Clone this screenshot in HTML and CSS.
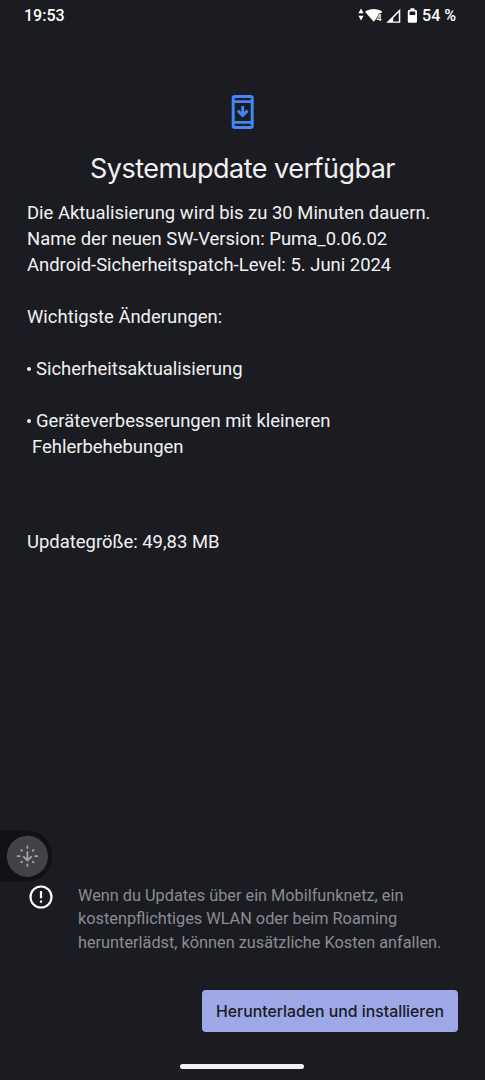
FILE: index.html
```html
<!DOCTYPE html>
<html lang="de">

<head>
    <meta charset="utf-8">
    <meta name="viewport" content="width=device-width, initial-scale=1">
    <title>Systemupdate</title>
    <link rel="stylesheet" href="styles.css">
</head>

<body>

<div class="statusbar">
    <span class="time">19:53</span>
    <div class="status-icons">
        <svg width="60" height="18" viewBox="0 0 60 18" fill="#fff">
            <path d="M3 1.5L5.6 6.3H.4zM3 13.5L.4 8.7h5.2z"/>
            <path d="M7 4.8C12 1 19.5 1 24.3 4.8L15.7 14.8z"/>
            <text x="18.6" y="13.8" class="wifi-text">4</text>
            <path fill-rule="evenodd" d="M42.3 1.8v14h-14zM40.8 5.3l-5.6 5.6v3.5h5.6z"/>
            <path fill-rule="evenodd" d="M52.5 1.2h3.8v1.5h1.2q1.5 0 1.5 1.5v10q0 1.5-1.5 1.5h-6.2q-1.5 0-1.5-1.5V4.2q0-1.5 1.5-1.5h1.2zM51.6 4.5v3.4h5.6V4.5z"/>
        </svg>
        <span class="battery">54 %</span>
    </div>
</div>

<div class="header">
    <svg width="24" height="36" viewBox="0 0 24 36" fill="none" stroke="#4285f4" stroke-width="3">
        <rect x="2.2" y="2.5" width="19" height="31" rx="1.5"/>
        <path d="M2 7.6h20M2 28.4h20" stroke-width="2.6"/>
        <path d="M11.7 12v9.5M6.8 16.6l4.9 4.9 4.9-4.9" stroke-width="2.9"/>
    </svg>
    <h1>Systemupdate verfügbar</h1>
</div>

<div class="content">
    <p>Die Aktualisierung wird bis zu 30 Minuten dauern.<br>
        Name der neuen SW-Version: Puma_0.06.02<br>
        Android-Sicherheitspatch-Level: 5. Juni 2024</p>
    <p>Wichtigste Änderungen:</p>
    <p class="change">Sicherheitsaktualisierung</p>
    <p class="change">Geräteverbesserungen mit kleineren<br>
        <span class="second">Fehlerbehebungen</span></p>
    <p class="size">Updategröße: 49,83 MB</p>
</div>

<div class="bubble">
    <svg width="42" height="42" viewBox="0 0 42 42" fill="none" stroke="#a3a4a7" stroke-width="1.8" stroke-linecap="round">
        <circle cx="21.4" cy="21.3" r="20.6" fill="#424347" stroke="none"/>
        <path d="M21.4 17v8.2M17.7 21.8l3.7 3.6 3.7-3.6"/>
        <path d="M21.4 11.5v1.5M21.4 29.5v1.5M11.6 21.2h2M29.2 21.2h2M15.2 15l.8.8M27.6 15l-.8.8M15.2 27.4l.8-.8M27.6 27.4l-.8-.8"/>
    </svg>
</div>

<div class="notice">
    <svg width="24" height="24" viewBox="0 0 24 24" fill="none" stroke="#fff" stroke-width="2.2">
        <circle cx="12" cy="12" r="10.5"/>
        <path d="M12 6v7.3M12 15.5v2.3"/>
    </svg>
    <p>Wenn du Updates über ein Mobilfunknetz, ein<br>
        kostenpflichtiges WLAN oder beim Roaming<br>
        herunterlädst, können zusätzliche Kosten anfallen.</p>
</div>

<div class="actions">
    <button type="button">Herunterladen und installieren</button>
</div>

<div class="navbar"></div>

</body>
</html>
```
FILE: styles.css
```css
* {
    box-sizing: border-box;
}

body {
    margin: 0;
    height: 1080px;
    display: flex;
    flex-direction: column;
    overflow: hidden;
    background-color: #1b1c21;
    color: #f1f1f3;
    font-family: Roboto, sans-serif;
}

svg {
    display: block;
    flex: none;
}

h1, p {
    margin: 0;
}

.statusbar {
    height: 31px;
    padding: 0 29px 0 24px;
    display: flex;
    justify-content: space-between;
    align-items: center;
    font-size: 16px;
    font-weight: 500;
    color: #fff;
}

.status-icons {
    display: flex;
    align-items: center;
    gap: 4px;
}

/* dark outline cuts the digit out of the wifi fan */
.wifi-text {
    font-size: 9px;
    font-weight: 500;
    stroke: #1b1c21;
    stroke-width: 1.4px;
    paint-order: stroke;
}

/* Icon and title */
.header {
    height: 169px;
    padding-top: 63px;
    display: flex;
    flex-direction: column;
    align-items: center;
}

h1 {
    margin-top: 21px;
    font-family: Inter, sans-serif;
    font-size: 27px;
    font-weight: 400;
    line-height: 36px;
    letter-spacing: -0.52px;
    white-space: nowrap;
}

.content {
    padding-left: 27px;
    font-size: 18.46px;
    line-height: 26px;
    white-space: nowrap;
}

.content p {
    margin-bottom: 26px;
}

.change::before {
    content: "";
    display: inline-block;
    width: 4px;
    height: 4px;
    margin-right: 5px;
    border-radius: 50%;
    background-color: #f1f1f3;
    vertical-align: 4px;
}

.second {
    margin-left: 5px;
}

.content .size {
    margin: 69px 0 0;
}

/* Floating button at the left edge */
.bubble {
    width: 54px;
    height: 54px;
    margin-top: auto;
    padding: 5px 0 0 6px;
    border: 1px solid #222328;
    border-left: none;
    border-radius: 0 27px 27px 0;
    background-color: #111216;
}

.notice {
    height: 107px;
    padding-left: 29px;
    display: flex;
    gap: 25px;
    font-size: 16.3px;
    line-height: 23.3px;
    color: #8b8c91;
    white-space: nowrap;
}

.notice svg {
    margin-top: 2px;
}

.notice p {
    margin-top: 1px;
}

.actions {
    padding-right: 27px;
    display: flex;
    justify-content: flex-end;
}

button {
    width: 256px;
    height: 42px;
    padding: 0;
    border: none;
    border-radius: 4px;
    background-color: #9fa8e6;
    color: #171b26;
    font-family: Inter, sans-serif;
    font-size: 15.8px;
    font-weight: 500;
    white-space: nowrap;
}

.navbar {
    width: 124px;
    height: 5px;
    margin: 32px 181px 11px 180px;
    flex: none;
    border-radius: 3px;
    background-color: #f3f3f3;
}
```
